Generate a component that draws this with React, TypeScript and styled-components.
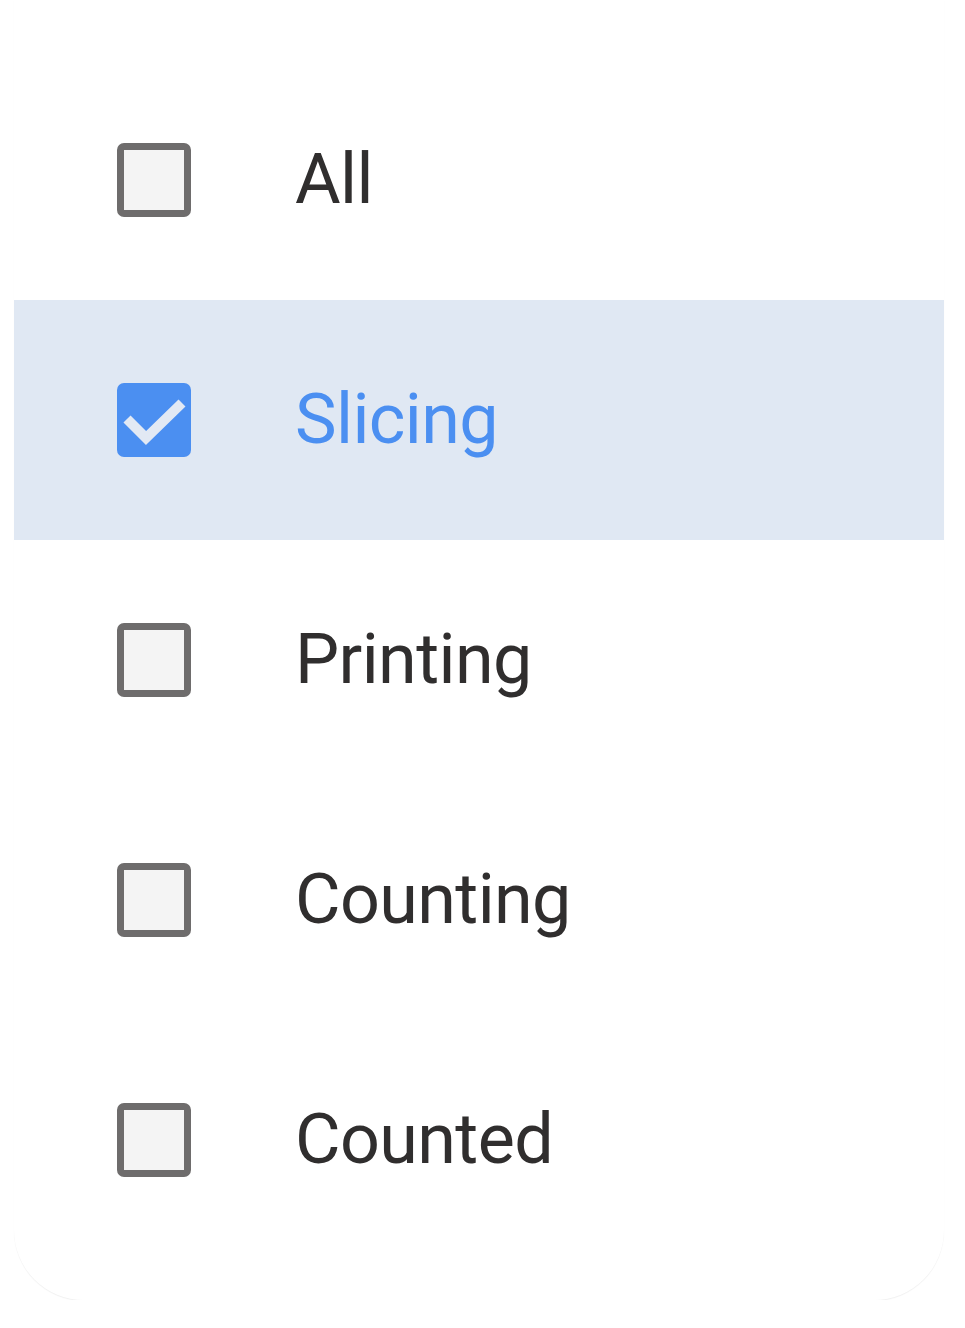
import { createGlobalStyle, styled } from "styled-components"

const GlobalStyle = createGlobalStyle`
    html, body {
        margin: 0;
        padding: 0;
        background: #ffffff;
    }
    body {
        font-family: Roboto, "Noto Sans", sans-serif;
    }
`

const Sheet = styled.div`
    margin: 0 21px 0 14px;
    padding: 60px 0 40px 0;
    background: #ffffff;
    border-radius: 0 0 70px 70px;
    box-shadow: 0 1px 1px rgba(0, 0, 0, 0.06);
`

const Row = styled.label<{ $active?: boolean }>`
    display: flex;
    align-items: center;
    gap: 104px;
    height: 240px;
    padding-left: 103px;
    box-sizing: border-box;
    background: ${(p) => (p.$active ? "#e0e8f3" : "transparent")};
    cursor: pointer;
`

const Box = styled.span<{ $checked?: boolean }>`
    display: flex;
    align-items: center;
    justify-content: center;
    width: 74px;
    height: 74px;
    box-sizing: border-box;
    border-radius: 7px;
    border: ${(p) => (p.$checked ? "none" : "7px solid #6e6c6c")};
    background: ${(p) => (p.$checked ? "#4b8ff1" : "#f4f4f4")};
    flex-shrink: 0;
`

const Label = styled.span<{ $active?: boolean }>`
    font-size: 70px;
    line-height: 1;
    margin-top: -3px;
    color: ${(p) => (p.$active ? "#4b8ff1" : "#302e2e")};
    letter-spacing: -0.6px;
`

const Check = () => (
    <svg width="74" height="74" viewBox="0 0 74 74">
        <path d="M10 36 L29 55 L65 20" fill="none" stroke="#e2e9f4" strokeWidth="10" strokeLinecap="butt" strokeLinejoin="miter" />
    </svg>
)

const items = [
    { name: "All", checked: false },
    { name: "Slicing", checked: true },
    { name: "Printing", checked: false },
    { name: "Counting", checked: false },
    { name: "Counted", checked: false },
]

export default function App() {
    return (
        <>
            <GlobalStyle />
            <Sheet>
                {items.map((it) => (
                    <Row key={it.name} $active={it.checked}>
                        <Box $checked={it.checked}>{it.checked && <Check />}</Box>
                        <Label $active={it.checked}>{it.name}</Label>
                    </Row>
                ))}
            </Sheet>
        </>
    )
}
